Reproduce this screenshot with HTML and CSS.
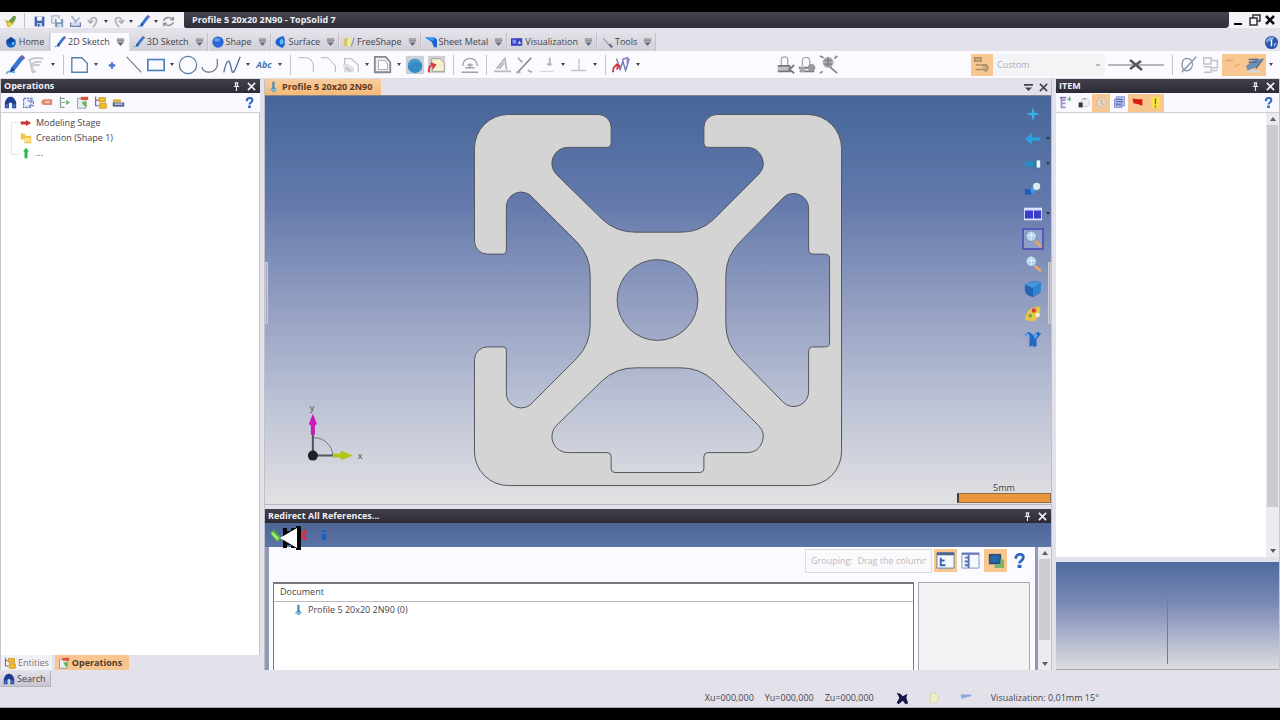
FILE: index.html
```html
<!DOCTYPE html>
<html lang="en">
<head>
<meta charset="utf-8">
<title>Profile 5 20x20 2N90 - TopSolid 7</title>
<link rel="stylesheet" href="styles.css">
</head>
<body>
<svg class="sprite" aria-hidden="true">
  <symbol id="logo" viewBox="0 0 16 16"><path d="M1 6l5 1 6-6 3 1-2 7-6 6-3-1-1-4z" fill="#c9b93c"/><path d="M6 7l6-6 3 1-2 5-5 3z" fill="#6f9650"/><path d="M4 10l4-1 1 4-2 2z" fill="#f0dc4c"/></symbol>
  <symbol id="save" viewBox="0 0 16 16"><path d="M2 2h12v12H2z" fill="#4565ad"/><path d="M5 2h6v5H5z" fill="#f2f5fc"/><path d="M5 10h6v4H5z" fill="#c8d5ee"/><path d="M6 11h2v3H6z" fill="#33508f"/></symbol>
  <symbol id="saveall" viewBox="0 0 16 16"><path d="M1 1h9v9H1z" fill="#e9edf4" stroke="#8b98b3"/><path d="M5 5h10v10H5z" fill="#8196bd"/><path d="M7 5h5v4H7z" fill="#fff"/><path d="M8 11h5v4H8z" fill="#d4ddec"/></symbol>
  <symbol id="import" viewBox="0 0 16 16"><path d="M2 9v5h12V9" fill="#d7def0" stroke="#6e81b4" stroke-width="1.5"/><path d="M3 1l5 7M13 3L7 10" stroke="#9eacd0" stroke-width="2"/></symbol>
  <symbol id="undo" viewBox="0 0 16 16"><path d="M7 15c6-5 6-11 2-12-4 0-5 3-5 6M1 6l3 4 4-3" fill="none" stroke="#b0b1b8" stroke-width="2"/></symbol>
  <symbol id="redo" viewBox="0 0 16 16"><path d="M9 15C3 10 3 4 7 3c4 0 5 3 5 6M15 6l-3 4-4-3" fill="none" stroke="#b0b1b8" stroke-width="2"/></symbol>
  <symbol id="pencil" viewBox="0 0 16 16"><path d="M5 10l7-9 3 2-7 9-4 2z" fill="#3672cf"/><path d="M12 1l2-1 2 2-1 2z" fill="#8c5aa2"/><path d="M1 15c2-3 4-2 7-1" fill="none" stroke="#62b1df" stroke-width="1.6"/><path d="M5 10l3 2-4 2z" fill="#223f82"/></symbol>
  <symbol id="refresh" viewBox="0 0 16 16"><path d="M2 7c2-5 9-5 12-1M14 9c-2 5-9 5-12 1M14 2v4h-4M2 14v-4h4" fill="none" stroke="#90919a" stroke-width="1.8"/></symbol>
  <symbol id="home" viewBox="0 0 16 16"><circle cx="8" cy="9" r="6.5" fill="#1763cd"/><path d="M1 7l7-6 6 5-4 1-1 5-5-3z" fill="#124696"/><path d="M8 9l5-1-2 5z" fill="#67c4f2"/></symbol>
  <symbol id="ball" viewBox="0 0 16 16"><circle cx="8" cy="8" r="7.500" fill="#2767d7"/><ellipse cx="7" cy="5" rx="4" ry="2.5" fill="#5d9af0"/></symbol>
  <symbol id="surface" viewBox="0 0 16 16"><path d="M11 0C2 2 0 6 1 10c1 3 5 4 9 6l3-4V4z" fill="#1862cd"/><path d="M10 3C6 5 5 8 8 12l4-3z" fill="#69b3f3"/></symbol>
  <symbol id="freeshape" viewBox="0 0 16 16"><path d="M1 4l5-2v11l-5 1z" fill="#d5c75c"/><path d="M6 2l5 2v10l-5-1z" fill="#ece9a4"/><path d="M15 2l-4 12" stroke="#8794a5" stroke-width="1.5"/></symbol>
  <symbol id="metal" viewBox="0 0 16 16"><path d="M0 2h13l3 3v10h-4L9 8z" fill="#1762d4"/><path d="M0 2l13 1-3 4z" fill="#36a3ee"/></symbol>
  <symbol id="visual" viewBox="0 0 16 16"><path d="M0 3h15v10H0z" fill="#383dc0"/><path d="M2 5h5v5H2z" fill="#7b9bf3"/><path d="M9 11l2-5 3 4z" fill="#c6ceff"/></symbol>
  <symbol id="tool" viewBox="0 0 16 16"><path d="M3 3l8 9" stroke="#a1a7b8" stroke-width="2"/><path d="M11 11l4 4" stroke="#65697b" stroke-width="3"/></symbol>
  <symbol id="drop" viewBox="0 0 10 10"><path d="M1 1h8v4L5 9 1 5z" fill="#b5b4bb"/><path d="M1 1h8M1 3h8" stroke="#85848e"/><path d="M2 5h6L5 9z" fill="#6a6974"/></symbol>
  <symbol id="help" viewBox="0 0 16 16"><path d="M4 6c0-6 9-6 8-1 0 3-4 3-4 6" fill="none" stroke="#2e68b8" stroke-width="3"/><path d="M6 12.500h4v3.500H6z" fill="#2e68b8"/></symbol>
  <symbol id="pin" viewBox="0 0 10 10"><path d="M3 1h4M4 1v4m2-4v4M2 5h6M5 5v5" stroke="#e8e8ee" stroke-width="1.300"/></symbol>
  <symbol id="close" viewBox="0 0 10 10"><path d="M1 1l8 8M9 1L1 9" stroke="currentColor" stroke-width="1.800"/></symbol>
  <symbol id="sketchgray" viewBox="0 0 22 22"><path d="M2 6q5-4 16-2M4 11q6-5 12-3M8 18q-5-4 0-7l6 0M3 5l3 14 4-1" fill="none" stroke="#c8c9cf" stroke-width="2"/></symbol>
  <symbol id="contour" viewBox="0 0 22 22"><path d="M2 3h11l6 6v10H2z" fill="none" stroke="#5681ab" stroke-width="1.500"/></symbol>
  <symbol id="point" viewBox="0 0 22 22"><path d="M11 8v7M7.500 11.500h7" stroke="#4c72cb" stroke-width="2.500"/></symbol>
  <symbol id="line" viewBox="0 0 22 22"><path d="M3 2l16 17" stroke="#6c7785" stroke-width="1.200"/></symbol>
  <symbol id="rect" viewBox="0 0 22 22"><rect x="2" y="5" width="18" height="12" fill="none" stroke="#4b7db9" stroke-width="1.800"/></symbol>
  <symbol id="circle" viewBox="0 0 22 22"><circle cx="11" cy="11" r="9.500" fill="none" stroke="#59799a" stroke-width="1.300"/></symbol>
  <symbol id="arc" viewBox="0 0 22 22"><path d="M2 13c2 8 14 8 17-1V4" fill="none" stroke="#637489" stroke-width="1.300"/></symbol>
  <symbol id="spline" viewBox="0 0 22 22"><path d="M2 19C5 5 8 3 10 14s4 3 10-12" fill="none" stroke="#50749b" stroke-width="1.500"/></symbol>
  <symbol id="fillet" viewBox="0 0 22 22"><path d="M2 3h6q10 0 10 10v6" fill="none" stroke="#abacb1"/></symbol>
  <symbol id="chamfer" viewBox="0 0 22 22"><path d="M2 3h8l8 9v7" fill="none" stroke="#abacb1"/></symbol>
  <symbol id="cut" viewBox="0 0 22 22"><path d="M4 19V4h7l8 7v8" fill="none" stroke="#c0c1c6" stroke-width="1.400"/><path d="M2 10h6l6 4v5H4z" fill="#dedfe3"/><path d="M5 14l6 4" stroke="#c0c1c6" stroke-width="2"/></symbol>
  <symbol id="offset" viewBox="0 0 22 22"><path d="M2 2h12l5 6v11H2z" fill="#eee" stroke="#888991" stroke-width="2"/><path d="M6 6h7l3 4v6H6z" fill="#fff" stroke="#a7a8af"/></symbol>
  <symbol id="sphere" viewBox="0 0 22 22"><path d="M1 1h20v20H1z" fill="#cdd0d6"/><circle cx="11" cy="12" r="8" fill="#348bc6"/><path d="M4 11c4-6 11-6 14-2" fill="none" stroke="#6cb4df"/></symbol>
  <symbol id="project" viewBox="0 0 22 22"><path d="M1 1h19v19H1z" fill="#d3d0d5"/><path d="M5 4h9l5 5v9H6z" fill="#f9f0ce" stroke="#9ba094"/><path d="M2 19c0-7 1-8 6-8M4 9l5 2-3 4" stroke="#d73943" stroke-width="2" fill="none"/></symbol>
  <symbol id="dial" viewBox="0 0 22 22"><path d="M3 12C3 1 19 1 19 12M2 19h18M6 14h10M11 9v5M8 11h6" fill="none" stroke="#a0a1a8" stroke-width="1.500"/></symbol>
  <symbol id="angle" viewBox="0 0 22 22"><path d="M1 18h19M4 15l9-11 2 12M7 15l5-6" fill="none" stroke="#b8b8bd" stroke-width="2"/></symbol>
  <symbol id="trim" viewBox="0 0 22 22"><path d="M3 19L18 3" stroke="#7e7f86" stroke-width="1.500"/><path d="M3 3l5 5M14 17l5 2M1 19h5" stroke="#aeb0b4" stroke-width="2"/></symbol>
  <symbol id="perp" viewBox="0 0 22 22"><path d="M3 18h15" stroke="#cfcfd3"/><path d="M14 3v9m-3-2h5" stroke="#b2b3b9" stroke-width="2"/></symbol>
  <symbol id="tee" viewBox="0 0 22 22"><path d="M2 17h17M11 4v13" stroke="#c4c5c9" stroke-width="1.500"/></symbol>
  <symbol id="measure" viewBox="0 0 22 22"><path d="M5 4l4 12 3-9 3 10 4-13" fill="none" stroke="#6d76ad" stroke-width="1.500"/><path d="M1 19c0-6 2-8 7-7M4 10l4 2-3 4" fill="none" stroke="#d62e3b" stroke-width="2"/><path d="M11 5l6-2v7" fill="none" stroke="#9a80d2" stroke-width="2"/></symbol>
  <symbol id="lock1" viewBox="0 0 22 22"><path d="M7 11V5c0-4 7-4 7 0v6" fill="none" stroke="#a9aab0" stroke-width="1.500"/><path d="M3 12h13v6H3m14-3l4-4m-5 5l5 4" stroke="#77787e" stroke-width="2" fill="#c0c0c4"/></symbol>
  <symbol id="lock2" viewBox="0 0 22 22"><path d="M6 12V6c0-5 8-4 8 0v5" fill="none" stroke="#a9aab0" stroke-width="1.500"/><path d="M2 14h18M3 18h16" stroke="#78797e" stroke-width="2"/><circle cx="6" cy="16" r="3" fill="#aaa"/><circle cx="16" cy="14" r="4" fill="#999aa0"/></symbol>
  <symbol id="net" viewBox="0 0 22 22"><circle cx="10" cy="8" r="6" fill="#aeafb5"/><path d="M1 1l4 2m15-2l-3 3M1 20l3-2m8-5l8 7M6 6h8M10 3v10M6 10h8" fill="none" stroke="#808188" stroke-width="1.800"/></symbol>
  <symbol id="layers" viewBox="0 0 22 22"><path d="M3 3h7v4H3zm1 8h13M4 16h11M11 11c8-2 8 5 3 7" fill="#c9ab80" stroke="#a98c69" stroke-width="1.600"/></symbol>
  <symbol id="slash" viewBox="0 0 22 22"><path d="M3 19L19 2M5 5c8-5 14 6 6 12-8 2-9-6-6-12" fill="none" stroke="#8796a8" stroke-width="1.500"/></symbol>
  <symbol id="hatch" viewBox="0 0 22 22"><path d="M3 3h8v7H3zm0 10h8v6H3M12 6h6v8h-6m0 3h6" fill="none" stroke="#c1c2c8" stroke-width="1.600"/></symbol>
  <symbol id="orange" viewBox="0 0 22 22"><path d="M3 6h8M13 13l5-3" stroke="#e0a570" stroke-width="1.500"/></symbol>
  <symbol id="plane" viewBox="0 0 22 22"><path d="M1 12l8-6 11-2-6 9-11 4z" fill="#7290b3"/><path d="M4 5h11M4 8h10M12 15l8-11" stroke="#516a95" stroke-width="1.500"/><path d="M4 18h12" stroke="#d3d9e1" stroke-width="3"/></symbol>
  <symbol id="binoculars" viewBox="0 0 16 16"><path d="M1 15V8q2-7 7-7t7 7v7h-5V9q-2-2-4 0v6z" fill="#213d92"/><path d="M2 10h3v4H2zm9 0h3v4h-3z" fill="#3b75cc"/></symbol>
  <symbol id="frame" viewBox="0 0 16 16"><path d="M2 3h9v11H2V3m5 3h7v6H7" fill="#eef2ff" stroke="#6579b5" stroke-width="1.500" stroke-dasharray="3 1"/><path d="M12 1v4m-2-2h4" stroke="#67b8de"/></symbol>
  <symbol id="itemtree" viewBox="0 0 16 16"><path d="M3 2v12h5M3 5h5M3 9h5" fill="none" stroke="#9a8fc4" stroke-width="2"/><path d="M1 2h8" stroke="#8278ad" stroke-width="2"/><path d="M13 1v5m-3-2h5" stroke="#4fae62" stroke-width="1.500"/></symbol>
  <symbol id="tag" viewBox="0 0 16 16"><path d="M1 8l3-4h11v7H4z" fill="#dc8c69"/><path d="M6 7.500h6" stroke="#f5d0be" stroke-width="2"/></symbol>
  <symbol id="branch" viewBox="0 0 16 16"><path d="M3 1v13m0-11h5M3 8h6M3 14h5" stroke="#84a693" fill="none" stroke-width="1.500"/><path d="M10 5l5 3-5 3z" fill="#61bc75"/></symbol>
  <symbol id="ops" viewBox="0 0 16 16"><path d="M2 3h10v12H2z" fill="#e7eff0" stroke="#7c8da0"/><path d="M6 1h9v4H6z" fill="#e04f36"/><path d="M7 7h6v7l-4-3z" fill="#66b657"/></symbol>
  <symbol id="entities" viewBox="0 0 16 16"><path d="M2 1v11h4M2 5h4" fill="none" stroke="#8160a4" stroke-width="1.500"/><path d="M6 2h8v5H6zm1 7h8v6H7z" fill="#efbd26" stroke="#ca8e18"/></symbol>
  <symbol id="stack" viewBox="0 0 16 16"><path d="M1 4h10v4H1z" fill="#deb53e"/><path d="M1 8h14v5H1z" fill="#4a5d91"/><path d="M3 10h10" stroke="#b4bfd8" stroke-width="2"/></symbol>
  <symbol id="flag" viewBox="0 0 16 16"><path d="M2 3l6 1h6v8l-5-2-6-1z" fill="#dd180c"/></symbol>
  <symbol id="warning" viewBox="0 0 16 16"><path d="M3 1h10v14H3z" fill="#fae34b"/><path d="M8 3v7m0 2v2" stroke="#796a23" stroke-width="1.700"/></symbol>
  <symbol id="moon" viewBox="0 0 16 16"><circle cx="10" cy="8" r="5" fill="#eff0f1" stroke="#c5c6cc"/><path d="M2 8h5v6H2z" fill="#34363b"/><path d="M7 4q2-2 4 0" stroke="#77787f" fill="none"/></symbol>
  <symbol id="clock" viewBox="0 0 16 16"><circle cx="8" cy="8" r="6" fill="#e7d2c0" stroke="#c9b5a4"/><path d="M8 5v4l3 2" stroke="#a89fb0" fill="none"/></symbol>
  <symbol id="sheets" viewBox="0 0 16 16"><path d="M4 1h10v11H4zM2 4h9v10H2z" fill="#cbd3f4" stroke="#6a78bd"/><path d="M5 4h7M5 7h7M4 10h6" stroke="#4e66b3" stroke-width="1.500"/></symbol>
  <symbol id="profile" viewBox="0 0 16 16"><path d="M7 1h3v7l3 4-4 3-5-3 3-3z" fill="#458fb8"/><path d="M5 12h7" stroke="#90d2ee" stroke-width="2"/></symbol>
  <symbol id="redarrow" viewBox="0 0 16 16"><path d="M1 6h7V4l7 4-7 4v-2H1z" fill="#c73b35"/></symbol>
  <symbol id="folder" viewBox="0 0 16 16"><path d="M1 2h6v3h8v10H6V10H1z" fill="#efc74e"/><path d="M6 8h8v5H6z" fill="#ffe28a"/></symbol>
  <symbol id="greenarrow" viewBox="0 0 16 16"><path d="M8 1l4 5h-2v9H6V6H4z" fill="#27b843"/></symbol>
  <symbol id="axes" viewBox="0 0 20 20"><path d="M10 4l1 5 5 1-5 1-1 5-1-5-5-1 5-1z" fill="#39b3ee" stroke="#39b3ee"/></symbol>
  <symbol id="viewleft" viewBox="0 0 20 20"><path d="M1 10l8-7v5h9v4H9v5z" fill="#2b9ee1"/></symbol>
  <symbol id="viewrec" viewBox="0 0 20 20"><path d="M1 7h9v6H1z" fill="#248dc9"/><path d="M11 5h7v10h-7z" fill="#36799c"/><path d="M14 6h4v8h-4z" fill="#eaf6fb"/></symbol>
  <symbol id="viewpair" viewBox="0 0 20 20"><path d="M1 10h8v6H1z" fill="#225cb4"/><path d="M7 10l5-3 2 3-4 5H8z" fill="#3b9fe0"/><circle cx="14" cy="7" r="4" fill="#ddebf1"/></symbol>
  <symbol id="windows" viewBox="0 0 20 20"><path d="M0 3h20v14H0z" fill="#dce1ff"/><path d="M1 6h9v9H1zm10 0h8v9h-8z" fill="#383cc7"/></symbol>
  <symbol id="magnify" viewBox="0 0 20 20"><path d="M11 11l8 7" stroke="#e6a663" stroke-width="3"/><circle cx="8" cy="7" r="6" fill="#b4d4ea" stroke="#658bac"/><path d="M4 6h8M8 2v9" stroke="#e8f5fb"/></symbol>
  <symbol id="cube" viewBox="0 0 20 20"><path d="M1 5q9-6 18-2l-1 11-8 5q-9-2-9-7z" fill="#2464b8"/><path d="M1 5l9 4 9-6q-9-3-18 2z" fill="#4597df"/><path d="M10 9v10l8-5 1-11z" fill="#2d85d0"/></symbol>
  <symbol id="palette" viewBox="0 0 20 20"><path d="M1 17C2 5 9 1 18 2v9c-4 0-3 7-8 7z" fill="#e9c448"/><circle cx="11" cy="6" r="2.500" fill="#d5423c"/><circle cx="7" cy="12" r="2" fill="#66aa54"/><circle cx="15" cy="11" r="2.500" fill="#f8f0d4"/></symbol>
  <symbol id="tools" viewBox="0 0 20 20"><path d="M1 5l4-3 5 3v12l-4 2V9zM10 7l5-5 4 2-5 6v8l-4 1z" fill="#2569c7"/><path d="M3 4l3 4m8-3l-2 4" stroke="#72bdf2" stroke-width="2"/></symbol>
  <symbol id="treeview" viewBox="0 0 20 20"><path d="M1 2h18v16H1z" fill="#f4f8ff" stroke="#627da8"/><path d="M1 3h18" stroke="#4b6395" stroke-width="3"/><path d="M5 7v8h5M5 10h4" stroke="#3a66ab" stroke-width="2" fill="none"/></symbol>
  <symbol id="columns" viewBox="0 0 20 20"><path d="M1 2h18v16H1z" fill="#f5f8ff" stroke="#8593c0"/><path d="M1 3h18" stroke="#6378bc" stroke-width="2"/><path d="M8 4v14M4 7h3m-3 4h3m-3 4h3" stroke="#5570b5" stroke-width="2"/></symbol>
  <symbol id="monitor" viewBox="0 0 20 20"><path d="M3 3h13v11H3z" fill="#304f7b"/><path d="M5 5h9v7H5z" fill="#2768a8"/><path d="M15 9h4v9H9v-4h6z" fill="#76b76b"/></symbol>
  <symbol id="darkx" viewBox="0 0 16 16"><path d="M2 2l4 1 3 3 5-3-1 5 2 6-3 1-3-4-5 4-2-2 3-5z" fill="#17154b"/></symbol>
</svg>

<div class="app">
  <header class="titlebar">
    <div class="quick">
      <button class="qi" aria-label="Application"><svg><use href="#logo"/></svg></button><i class="sep"></i>
      <button class="qi" aria-label="Save"><svg><use href="#save"/></svg></button><button class="qi" aria-label="Save all"><svg><use href="#saveall"/></svg></button><button class="qi" aria-label="Import"><svg><use href="#import"/></svg></button>
      <button class="qi" aria-label="Undo"><svg><use href="#undo"/></svg></button><button class="more" aria-label="Undo list"></button><button class="qi" aria-label="Redo"><svg><use href="#redo"/></svg></button><button class="more" aria-label="Redo list"></button>
      <button class="qi" aria-label="Edit"><svg><use href="#pencil"/></svg></button><button class="more" aria-label="Edit list"></button><button class="qi" aria-label="Refresh"><svg><use href="#refresh"/></svg></button>
    </div>
    <h1>Profile 5 20x20 2N90 - TopSolid 7</h1>
    <div class="wincontrols">
      <button aria-label="Minimize"><svg viewBox="0 0 12 12"><path d="M1 9h8v2H1z"/></svg></button>
      <button aria-label="Restore"><svg viewBox="0 0 12 12"><path d="M4 4V1h7v6H8M1 4h7v7H1z" fill="none" stroke="#333" stroke-width="1.500"/></svg></button>
      <button aria-label="Close"><svg viewBox="0 0 12 12"><path d="M2 2l8 8M10 2l-8 8" stroke="#111" stroke-width="2.500"/></svg></button>
    </div>
  </header>

  <nav class="ribbon" aria-label="Ribbon">
    <button class="tab"><svg class="ic"><use href="#home"/></svg>Home</button>
    <button class="tab on"><svg class="ic"><use href="#pencil"/></svg>2D Sketch<svg class="dd"><use href="#drop"/></svg></button>
    <button class="tab"><svg class="ic"><use href="#pencil"/></svg>3D Sketch<svg class="dd"><use href="#drop"/></svg></button>
    <button class="tab"><svg class="ic"><use href="#ball"/></svg>Shape<svg class="dd"><use href="#drop"/></svg></button>
    <button class="tab"><svg class="ic"><use href="#surface"/></svg>Surface<svg class="dd"><use href="#drop"/></svg></button>
    <button class="tab"><svg class="ic"><use href="#freeshape"/></svg>FreeShape<svg class="dd"><use href="#drop"/></svg></button>
    <button class="tab"><svg class="ic"><use href="#metal"/></svg>Sheet Metal<svg class="dd"><use href="#drop"/></svg></button>
    <button class="tab"><svg class="ic"><use href="#visual"/></svg>Visualization<svg class="dd"><use href="#drop"/></svg></button>
    <button class="tab"><svg class="ic"><use href="#tool"/></svg>Tools<svg class="dd"><use href="#drop"/></svg></button>
    <button class="globe" aria-label="Help"><svg viewBox="0 0 16 16"><circle cx="8" cy="8" r="7" fill="#2756aa"/><path d="M2 6c3-5 7-5 9-3L8 7 5 6 3 9zM10 9l4-1-3 5z" fill="#82a8d8"/><path d="M8 5v7" stroke="#fff" stroke-width="1.500"/></svg></button>
  </nav>

  <div class="toolbar" role="toolbar" aria-label="2D Sketch">
    <div class="group">
      <button class="tb" aria-label="Sketch"><svg><use href="#pencil"/></svg></button><button class="tb" aria-label="Operations"><svg><use href="#sketchgray"/></svg></button><button class="more" aria-label="More operations"></button><i class="sep"></i>
      <button class="tb" aria-label="Contour"><svg><use href="#contour"/></svg></button><button class="more" aria-label="More contours"></button><button class="tb" aria-label="Point"><svg><use href="#point"/></svg></button><button class="tb" aria-label="Line"><svg><use href="#line"/></svg></button><button class="tb" aria-label="Rectangle"><svg><use href="#rect"/></svg></button><button class="more" aria-label="More rectangles"></button>
      <button class="tb" aria-label="Circle"><svg><use href="#circle"/></svg></button><button class="tb" aria-label="Arc"><svg><use href="#arc"/></svg></button><button class="tb" aria-label="Spline"><svg><use href="#spline"/></svg></button><button class="more" aria-label="More curves"></button><button class="tb abc">Abc</button><button class="more" aria-label="More text"></button><i class="sep"></i>
      <button class="tb" aria-label="Fillet"><svg><use href="#fillet"/></svg></button><button class="tb" aria-label="Chamfer"><svg><use href="#chamfer"/></svg></button><button class="tb" aria-label="Cut"><svg><use href="#cut"/></svg></button><button class="more" aria-label="More cuts"></button><button class="tb" aria-label="Offset"><svg><use href="#offset"/></svg></button><button class="more" aria-label="More offsets"></button><button class="tb" aria-label="Section"><svg><use href="#sphere"/></svg></button><button class="tb" aria-label="Projection"><svg><use href="#project"/></svg></button><i class="sep"></i>
      <button class="tb" aria-label="Constraint"><svg><use href="#dial"/></svg></button><i class="sep"></i><button class="tb" aria-label="Angle"><svg><use href="#angle"/></svg></button><button class="tb" aria-label="Trim"><svg><use href="#trim"/></svg></button><button class="tb" aria-label="Align"><svg><use href="#perp"/></svg></button><button class="more" aria-label="More alignments"></button><button class="tb" aria-label="Perpendicular"><svg><use href="#tee"/></svg></button><button class="more" aria-label="More perpendiculars"></button><i class="sep"></i>
      <button class="tb" aria-label="Analyze"><svg><use href="#measure"/></svg></button><button class="more" aria-label="More analysis"></button>
    </div>
    <div class="group">
      <button class="tb" aria-label="Lock"><svg><use href="#lock1"/></svg></button><button class="tb" aria-label="Lock all"><svg><use href="#lock2"/></svg></button><button class="tb" aria-label="Network"><svg><use href="#net"/></svg></button>
    </div>
    <div class="group">
      <button class="tb lit" aria-label="Layers"><svg><use href="#layers"/></svg></button>
      <select class="combo" aria-label="Style" disabled><option>Custom</option></select>
      <button class="linestyle" aria-label="Line style"><svg viewBox="0 0 56 16"><path d="M0 8h56" stroke="#73737c"/><path d="M22 3l12 10M33 4L22 12" stroke="#55555c" stroke-width="2.500"/></svg></button><i class="sep"></i>
      <button class="tb" aria-label="Diameter"><svg><use href="#slash"/></svg></button><button class="tb" aria-label="Hatching"><svg><use href="#hatch"/></svg></button><button class="tb lit" aria-label="Snap"><svg><use href="#orange"/></svg></button><button class="tb lit" aria-label="Plane"><svg><use href="#plane"/></svg></button><button class="more" aria-label="More display"></button>
    </div>
  </div>

  <main class="work">
    <section class="left">
      <div class="phead"><h2>Operations</h2><button aria-label="Pin"><svg><use href="#pin"/></svg></button><button aria-label="Close"><svg><use href="#close"/></svg></button></div>
      <div class="ptools">
        <button aria-label="Find"><svg><use href="#binoculars"/></svg></button><button aria-label="Frame"><svg><use href="#frame"/></svg></button><button aria-label="Tag"><svg><use href="#tag"/></svg></button><button aria-label="Branch"><svg><use href="#branch"/></svg></button><button aria-label="Operation"><svg><use href="#ops"/></svg></button><button aria-label="Entities"><svg><use href="#entities"/></svg></button><button aria-label="Stages"><svg><use href="#stack"/></svg></button>
        <button class="end" aria-label="Help"><svg><use href="#help"/></svg></button>
      </div>
      <ul class="tree">
        <li><svg><use href="#redarrow"/></svg>Modeling Stage</li>
        <li><svg><use href="#folder"/></svg>Creation (Shape 1)</li>
        <li><svg><use href="#greenarrow"/></svg>...</li>
      </ul>
      <div class="ptabs"><button><svg><use href="#entities"/></svg>Entities</button><button class="on"><svg><use href="#ops"/></svg>Operations</button></div>
    </section>

    <section class="center">
      <div class="doctabs"><button class="doc"><svg><use href="#profile"/></svg>Profile 5 20x20 2N90</button><button class="win" aria-label="Window list"><svg viewBox="0 0 10 10"><path d="M0 1h10v2H0zm1 4h8L5 9z" fill="#44434c"/></svg></button><button class="win" aria-label="Close"><svg><use href="#close"/></svg></button></div>
      <div class="viewport">
        <svg class="drawing" viewBox="264 96 788 408" role="img" aria-label="Aluminium profile section">
          <path fill="#d4d4d4" fill-rule="evenodd" stroke="#53565d" d="M508 114H598A13 13 0 0 1 611 127V143Q611 147 607 147H568A16 16 0 0 0 556 174L602 219A48 48 0 0 0 636 232H680A48 48 0 0 0 714 219L759 174A16 16 0 0 0 748 147H708Q704 147 704 143V127A13 13 0 0 1 717 114H808A34 34 0 0 1 842 148V452A34 34 0 0 1 808 486H508A34 34 0 0 1 474 452V360A13 13 0 0 1 487 347H503Q506 347 506 351V391A15 15 0 0 0 533 402L577 358A48 48 0 0 0 590 324V276A48 48 0 0 0 577 242L533 198A15 15 0 0 0 506 209V250Q506 254 503 254H487A13 13 0 0 1 474 241V148A34 34 0 0 1 508 114ZM726 276A48 48 0 0 1 740 242L783 198A15 15 0 0 1 809 209V250Q809 254 813 254H825Q830 254 830 258V343Q830 347 825 347H813Q809 347 809 351V391A15 15 0 0 1 783 402L740 358A48 48 0 0 1 726 324ZM636 368H680A48 48 0 0 1 714 381L759 426A16 16 0 0 1 748 453H708Q704 453 704 457V469Q704 473 700 473H615Q611 473 611 469V457Q611 453 607 453H568A16 16 0 0 1 556 426L602 381A48 48 0 0 1 636 368ZM617 300A40 40 0 1 0 698 300A40 40 0 1 0 617 300Z"/>
          <path d="M313 438a19 19 0 0 1 19 18" fill="none" stroke="#77787d"/>
          <path d="M312 456V425M312 456h22" stroke="#55535f" stroke-width="2"/>
          <path d="M312 414l4 10-2 2v9h-4v-9l-2-2z" fill="#cd18b8"/>
          <path d="M332 454h8v-3l12 5-12 5v-3h-8z" fill="#b2c416"/>
          <circle cx="312" cy="456" r="5" fill="#202127"/>
          <text x="309" y="411" class="axis">y</text><text x="357" y="459" class="axis">x</text>
        </svg>
        <div class="scale"><span>5mm</span><i></i></div>
        <i class="grip gl"></i><i class="grip gr"></i>
        <div class="viewtools">
          <button aria-label="Add view"><svg><use href="#axes"/></svg></button><button class="has" aria-label="Previous view"><svg><use href="#viewleft"/></svg></button><button class="has" aria-label="Camera"><svg><use href="#viewrec"/></svg></button><button aria-label="Orientation"><svg><use href="#viewpair"/></svg></button><button class="has" aria-label="Windows"><svg><use href="#windows"/></svg></button><button class="on" aria-label="Zoom window"><svg><use href="#magnify"/></svg></button><button aria-label="Zoom"><svg><use href="#magnify"/></svg></button><button aria-label="Rendering"><svg><use href="#cube"/></svg></button><button aria-label="Materials"><svg><use href="#palette"/></svg></button><button aria-label="Settings"><svg><use href="#tools"/></svg></button>
        </div>
      </div>
      <section class="redirect">
        <div class="phead"><h2>Redirect All References...</h2><button aria-label="Pin"><svg><use href="#pin"/></svg></button><button aria-label="Close"><svg><use href="#close"/></svg></button></div>
        <div class="confirm">
          <button aria-label="OK"><svg viewBox="0 0 14 14"><path d="M1 5l4-3 7 8-3 4-3-2z" fill="#57ba36"/><path d="M3 5l6 6" stroke="#b7ed8e" stroke-width="2"/></svg></button>
          <button aria-label="Cancel"><svg viewBox="0 0 14 14"><path d="M7 2l6 10M13 2L7 12" stroke="#c9364d" stroke-width="3"/></svg></button>
          <button aria-label="Information"><svg viewBox="0 0 14 14"><path d="M7 2v2m0 2v6" stroke="#1263c4" stroke-width="4"/></svg></button>
          <svg class="cursor" viewBox="0 0 24 26" aria-hidden="true"><path d="M16 1h5v24h-5zM3 3h4v3h4V3h5v20h-5v-3H7v3H3z" fill="#080808"/><path d="M0 13L17 3v20z" fill="#fff"/></svg>
        </div>
        <div class="rbody">
          <div class="rcontent">
            <div class="grouping">
              <input type="text" aria-label="Grouping" placeholder="Grouping:  Drag the columns here">
              <button class="lit" aria-label="Tree view"><svg><use href="#treeview"/></svg></button><button aria-label="Columns"><svg><use href="#columns"/></svg></button><button class="lit" aria-label="Preview"><svg><use href="#monitor"/></svg></button><button class="q" aria-label="Help"><svg><use href="#help"/></svg></button>
            </div>
            <div class="split">
              <div class="docs"><table><thead><tr><th>Document</th></tr></thead><tbody><tr><td><svg><use href="#profile"/></svg>Profile 5 20x20 2N90 (0)</td></tr></tbody></table></div>
              <div class="details"></div>
            </div>
          </div>
          <div class="scroll short"><i class="up"></i><i class="thumb"></i><i class="down"></i></div>
        </div>
      </section>
    </section>

    <section class="right">
      <div class="phead"><h2>ITEM</h2><button aria-label="Pin"><svg><use href="#pin"/></svg></button><button aria-label="Close"><svg><use href="#close"/></svg></button></div>
      <div class="ptools">
        <button aria-label="Branch"><svg><use href="#itemtree"/></svg></button><button aria-label="Display"><svg><use href="#moon"/></svg></button><button class="lit" aria-label="History"><svg><use href="#clock"/></svg></button><button aria-label="Sheets"><svg><use href="#sheets"/></svg></button><button class="lit" aria-label="Flag"><svg><use href="#flag"/></svg></button><button class="lit" aria-label="Warnings"><svg><use href="#warning"/></svg></button>
        <button class="end" aria-label="Help"><svg><use href="#help"/></svg></button>
      </div>
      <div class="items"><div class="scroll"><i class="up"></i><i class="thumb"></i><i class="down"></i></div></div>
      <div class="preview"><i></i></div>
    </section>
  </main>

  <footer>
    <button class="search"><svg><use href="#binoculars"/></svg>Search</button>
    <div class="status">
      <span>Xu=000,000</span><span>Yu=000,000</span><span>Zu=000,000</span>
      <svg class="s1"><use href="#darkx"/></svg>
      <svg viewBox="0 0 16 16"><path d="M4 3l5-1 5 6-4 6-7-2z" fill="#eeeec5" stroke="#d0d0ac"/></svg>
      <svg viewBox="0 0 16 16"><path d="M2 4h12v2L8 7 3 9z" fill="#8ba7df"/></svg>
      <span>Visualization: 0,01mm 15°</span>
    </div>
  </footer>
</div>
</body>
</html>
```
FILE: styles.css
```css
* { box-sizing: border-box; }
body { margin: 0; background: #000; color: #44434b; font: 9px/14px "Open Sans", "Noto Sans", sans-serif; }
button { display: flex; align-items: center; justify-content: center; margin: 0; padding: 0; border: 0; background: none; color: inherit; font: inherit; white-space: nowrap; }
h1, h2 { margin: 0; font: bold 9px/14px "Open Sans", "Noto Sans", sans-serif; white-space: nowrap; }
svg { display: block; flex: none; }
.sprite { position: absolute; width: 0; height: 0; }

.app { display: flex; flex-direction: column; height: 100vh; border: solid #000; border-width: 12px 0; background: #e3e2eb; overflow: hidden; }
.sep { flex: none; width: 1px; height: 20px; margin: 0 5px; background: #c3c3cb; }
.more { flex: none; width: 10px; height: 16px; }
.more::after { content: ""; border: 2px solid transparent; border-top: 3px solid #42424a; border-bottom: 0; }

.titlebar { display: flex; flex: none; height: 16px; background: #f3f3f8; }
.quick { display: flex; align-items: center; width: 184px; padding: 2px 0 0 1px; }
.quick .sep { height: 16px; margin: 0 5px; }
.qi { width: 18px; }
.qi svg { width: 13px; height: 13px; }
.quick .more { width: 7px; }
.titlebar h1 { flex: 1; padding-left: 8px; line-height: 16px; color: #eeeef2; background: linear-gradient(#45444f, #302f39); border-radius: 0 0 4px 2px; }
.wincontrols { display: flex; align-items: center; justify-content: space-between; width: 51px; padding: 0 4px; }
.wincontrols svg { width: 12px; height: 12px; }

.ribbon { display: flex; align-items: flex-end; gap: 1px; flex: none; height: 23px; }
.tab { gap: 2px; height: 18px; padding: 0 3px; background: linear-gradient(#e2e1e8, #d0cfd8); border-right: 1px solid #c2c1ca; }
.tab:first-child { min-width: 50px; }
.tab.on { background: #fbfbff; border-color: #fbfbff; }
.tab .ic { width: 12px; height: 12px; }
.tab .dd { width: 9px; height: 9px; margin-left: 4px; }
.globe { width: 18px; height: 18px; margin-left: auto; }
.globe svg { width: 15px; height: 15px; }

.toolbar { display: flex; align-items: center; justify-content: space-between; flex: none; height: 28px; padding: 0 4px; background: #fbfbff; border-bottom: 1px solid #dddce5; }
.group { display: flex; align-items: center; }
.tb { width: 22px; height: 22px; }
.tb svg { width: 20px; height: 20px; }
.tb.abc { color: #3b78b5; font-style: italic; font-weight: bold; }
.lit { background: #f8c78f; }
.combo { width: 112px; height: 22px; padding: 0 4px; border: 0; background: #f4f4f7; color: #adadb3; opacity: 1; font: inherit; appearance: none; background-image: linear-gradient(#bbb, #bbb); background-size: 4px 2px; background-position: right 5px center; background-repeat: no-repeat; }
.linestyle { width: 62px; height: 20px; }
.linestyle svg { width: 56px; height: 16px; }

.work { display: flex; flex: 1; gap: 4px; min-height: 0; }
.left { display: flex; flex-direction: column; width: 260px; border-left: 1px solid #c7c6cf; }
.center { display: flex; flex: 1; flex-direction: column; min-width: 0; border: solid #c0c0ca; border-width: 0 1px; }
.right { display: flex; flex-direction: column; width: 224px; border-right: 1px solid #c7c6cf; }
.phead { display: flex; align-items: center; flex: none; height: 14px; padding: 0 1px 0 3px; background: linear-gradient(#41404b, #2c2b35); color: #f0f0f5; }
.phead h2 { flex: 1; }
.phead button { width: 15px; }
.phead svg { width: 9px; height: 9px; }
.ptools { display: flex; align-items: center; flex: none; height: 20px; background: #f8f8fe; border-bottom: 1px solid #cfced6; }
.ptools button { width: 18px; height: 18px; }
.ptools svg { width: 13px; height: 13px; }
.ptools .end { width: 22px; margin-left: auto; }
.ptools .end svg { width: 11px; height: 11px; }
.tree { position: relative; flex: 1; margin: 0; padding: 2px 0 0 19px; background: #fff; border-right: 1px solid #c7c6cf; list-style: none; }
.tree::before { position: absolute; top: 9px; left: 10px; width: 8px; height: 31px; border: 1px dotted #d0d0d0; border-right: 0; content: ""; }
.tree li { display: flex; align-items: center; gap: 4px; height: 15px; }
.tree svg { width: 12px; height: 12px; }
.ptabs { display: flex; gap: 3px; flex: none; height: 15px; }
.ptabs button { gap: 2px; padding: 0 3px; background: #f1f0f5; color: #77767d; }
.ptabs svg { width: 12px; height: 12px; }
.ptabs .on { padding-right: 7px; background: #f8c590; color: #4f3c2f; font-weight: bold; }

.doctabs { display: flex; align-items: center; flex: none; height: 17px; border-bottom: 1px solid #84848c; }
.doc { gap: 3px; height: 16px; margin-right: auto; padding: 0 9px 0 2px; background: linear-gradient(#f8cda0, #f5b978); color: #5c3823; font-weight: bold; }
.doc svg { width: 12px; height: 12px; }
.win { width: 15px; }
.win svg { width: 9px; height: 9px; }
.viewport { position: relative; flex: 1; min-height: 0; background: linear-gradient(#466698, #6278ab 25%, #919dc0 50%, #bcc2d5 75%, #e2e1e3); border-bottom: 1px solid #b7b7bd; }
.drawing { width: 100%; height: 100%; }
.axis { fill: #4a4a52; font-size: 9px; }
.scale { position: absolute; right: 0; bottom: 1px; width: 94px; text-align: center; line-height: 10px; }
.scale i { display: block; height: 10px; background: #eb973d; border: 1px solid #8e6c47; border-left: 2px solid #473b31; }
.grip { position: absolute; top: 166px; width: 3px; height: 62px; border: 1px solid #cbcbd6; background: #a6aabd; }
.gl { left: 0; }
.gr { right: 0; }
.viewtools { position: absolute; top: 7px; right: 7px; display: flex; flex-direction: column; gap: 3px; }
.viewtools button { position: relative; width: 22px; height: 22px; }
.viewtools svg { width: 18px; height: 18px; }
.viewtools .on { border: 2px solid #5858b7; background: #909fc9; }
.viewtools .has::after { position: absolute; top: 9px; right: -6px; border: 2px solid transparent; border-top: 3px solid #33333b; border-bottom: 0; content: ""; }

.redirect { display: flex; flex-direction: column; flex: none; height: 161px; margin-top: 4px; }
.confirm { position: relative; display: flex; align-items: center; gap: 10px; flex: none; height: 24px; padding-left: 4px; background: linear-gradient(#4e6797, #5b73a5); }
.confirm button, .confirm button svg { width: 14px; height: 14px; }
.cursor { position: absolute; top: 2px; left: 15px; width: 24px; height: 26px; }
.rbody { display: flex; flex: 1; min-height: 0; }
.rcontent { display: flex; flex: 1; flex-direction: column; min-width: 0; padding: 1px 5px 0 4px; border: solid #909ab6; border-width: 0 3px 0 4px; background: #fafaff; }
.grouping { display: flex; align-items: center; justify-content: flex-end; height: 25px; gap: 2px; }
.grouping input { width: 127px; height: 24px; padding: 0 5px; border: 1px solid #d9d9de; background: #fafafd; font: inherit; }
.grouping input::placeholder { color: #b9b9be; opacity: 1; }
.grouping button { width: 23px; height: 23px; }
.grouping svg { width: 19px; height: 19px; }
.grouping .q { width: 21px; }
.grouping .q svg { width: 15px; height: 15px; }
.split { display: flex; flex: 1; gap: 4px; margin-top: 9px; min-height: 0; }
.docs { flex: 1; border: solid #77777d; border-width: 2px 1px 0; background: #fff; }
.docs table { width: 100%; border-collapse: collapse; }
.docs th { height: 17px; padding: 0 6px; border-bottom: 1px solid #bababf; font-weight: normal; text-align: left; }
.docs td { display: flex; align-items: center; gap: 4px; height: 16px; padding: 0 18px; }
.docs td svg { width: 12px; height: 12px; }
.details { width: 112px; border: 1px solid #a6a6ac; border-bottom: 0; background: #f3f3f5; }
.scroll { display: flex; flex-direction: column; align-items: center; justify-content: space-between; width: 13px; padding: 4px 0; background: #ececf0; }
.scroll .up { border: 3px solid transparent; border-top: 0; border-bottom: 4px solid #5d5d63; }
.scroll .down { border: 3px solid transparent; border-bottom: 0; border-top: 4px solid #5d5d63; }
.scroll .thumb { width: 11px; flex: 1; margin: 4px 0 42px; background: #cbcbd1; }
.scroll.short .thumb { margin-bottom: 22px; }

.items { display: flex; justify-content: flex-end; flex: 1; background: #fff; }
.items .scroll { width: 13px; }
.preview { display: flex; align-items: flex-end; justify-content: center; flex: none; height: 108px; margin-top: 5px; padding-bottom: 5px; background: linear-gradient(#4e6b9d, #7686b2 35%, #a6aec9 65%, #dddce1); border-bottom: 1px solid #a6a6ad; }
.preview i { width: 1px; height: 68px; background: linear-gradient(#6f80aa, #74788b); }

footer { flex: none; height: 38px; padding-top: 1px; border-bottom: 1px solid #aaaab5; }
.search { gap: 2px; height: 16px; padding: 0 4px 0 3px; background: linear-gradient(#e2e1e8, #c9c8d2); border: solid #b4b3be; border-width: 0 1px 1px 0; }
.search svg { width: 12px; height: 12px; }
.status { display: flex; align-items: center; justify-content: flex-end; gap: 11px; height: 20px; padding: 2px 181px 0 0; }
.status svg { width: 14px; height: 14px; margin-right: 7px; }
.status .s1 { margin-left: 10px; }
```
